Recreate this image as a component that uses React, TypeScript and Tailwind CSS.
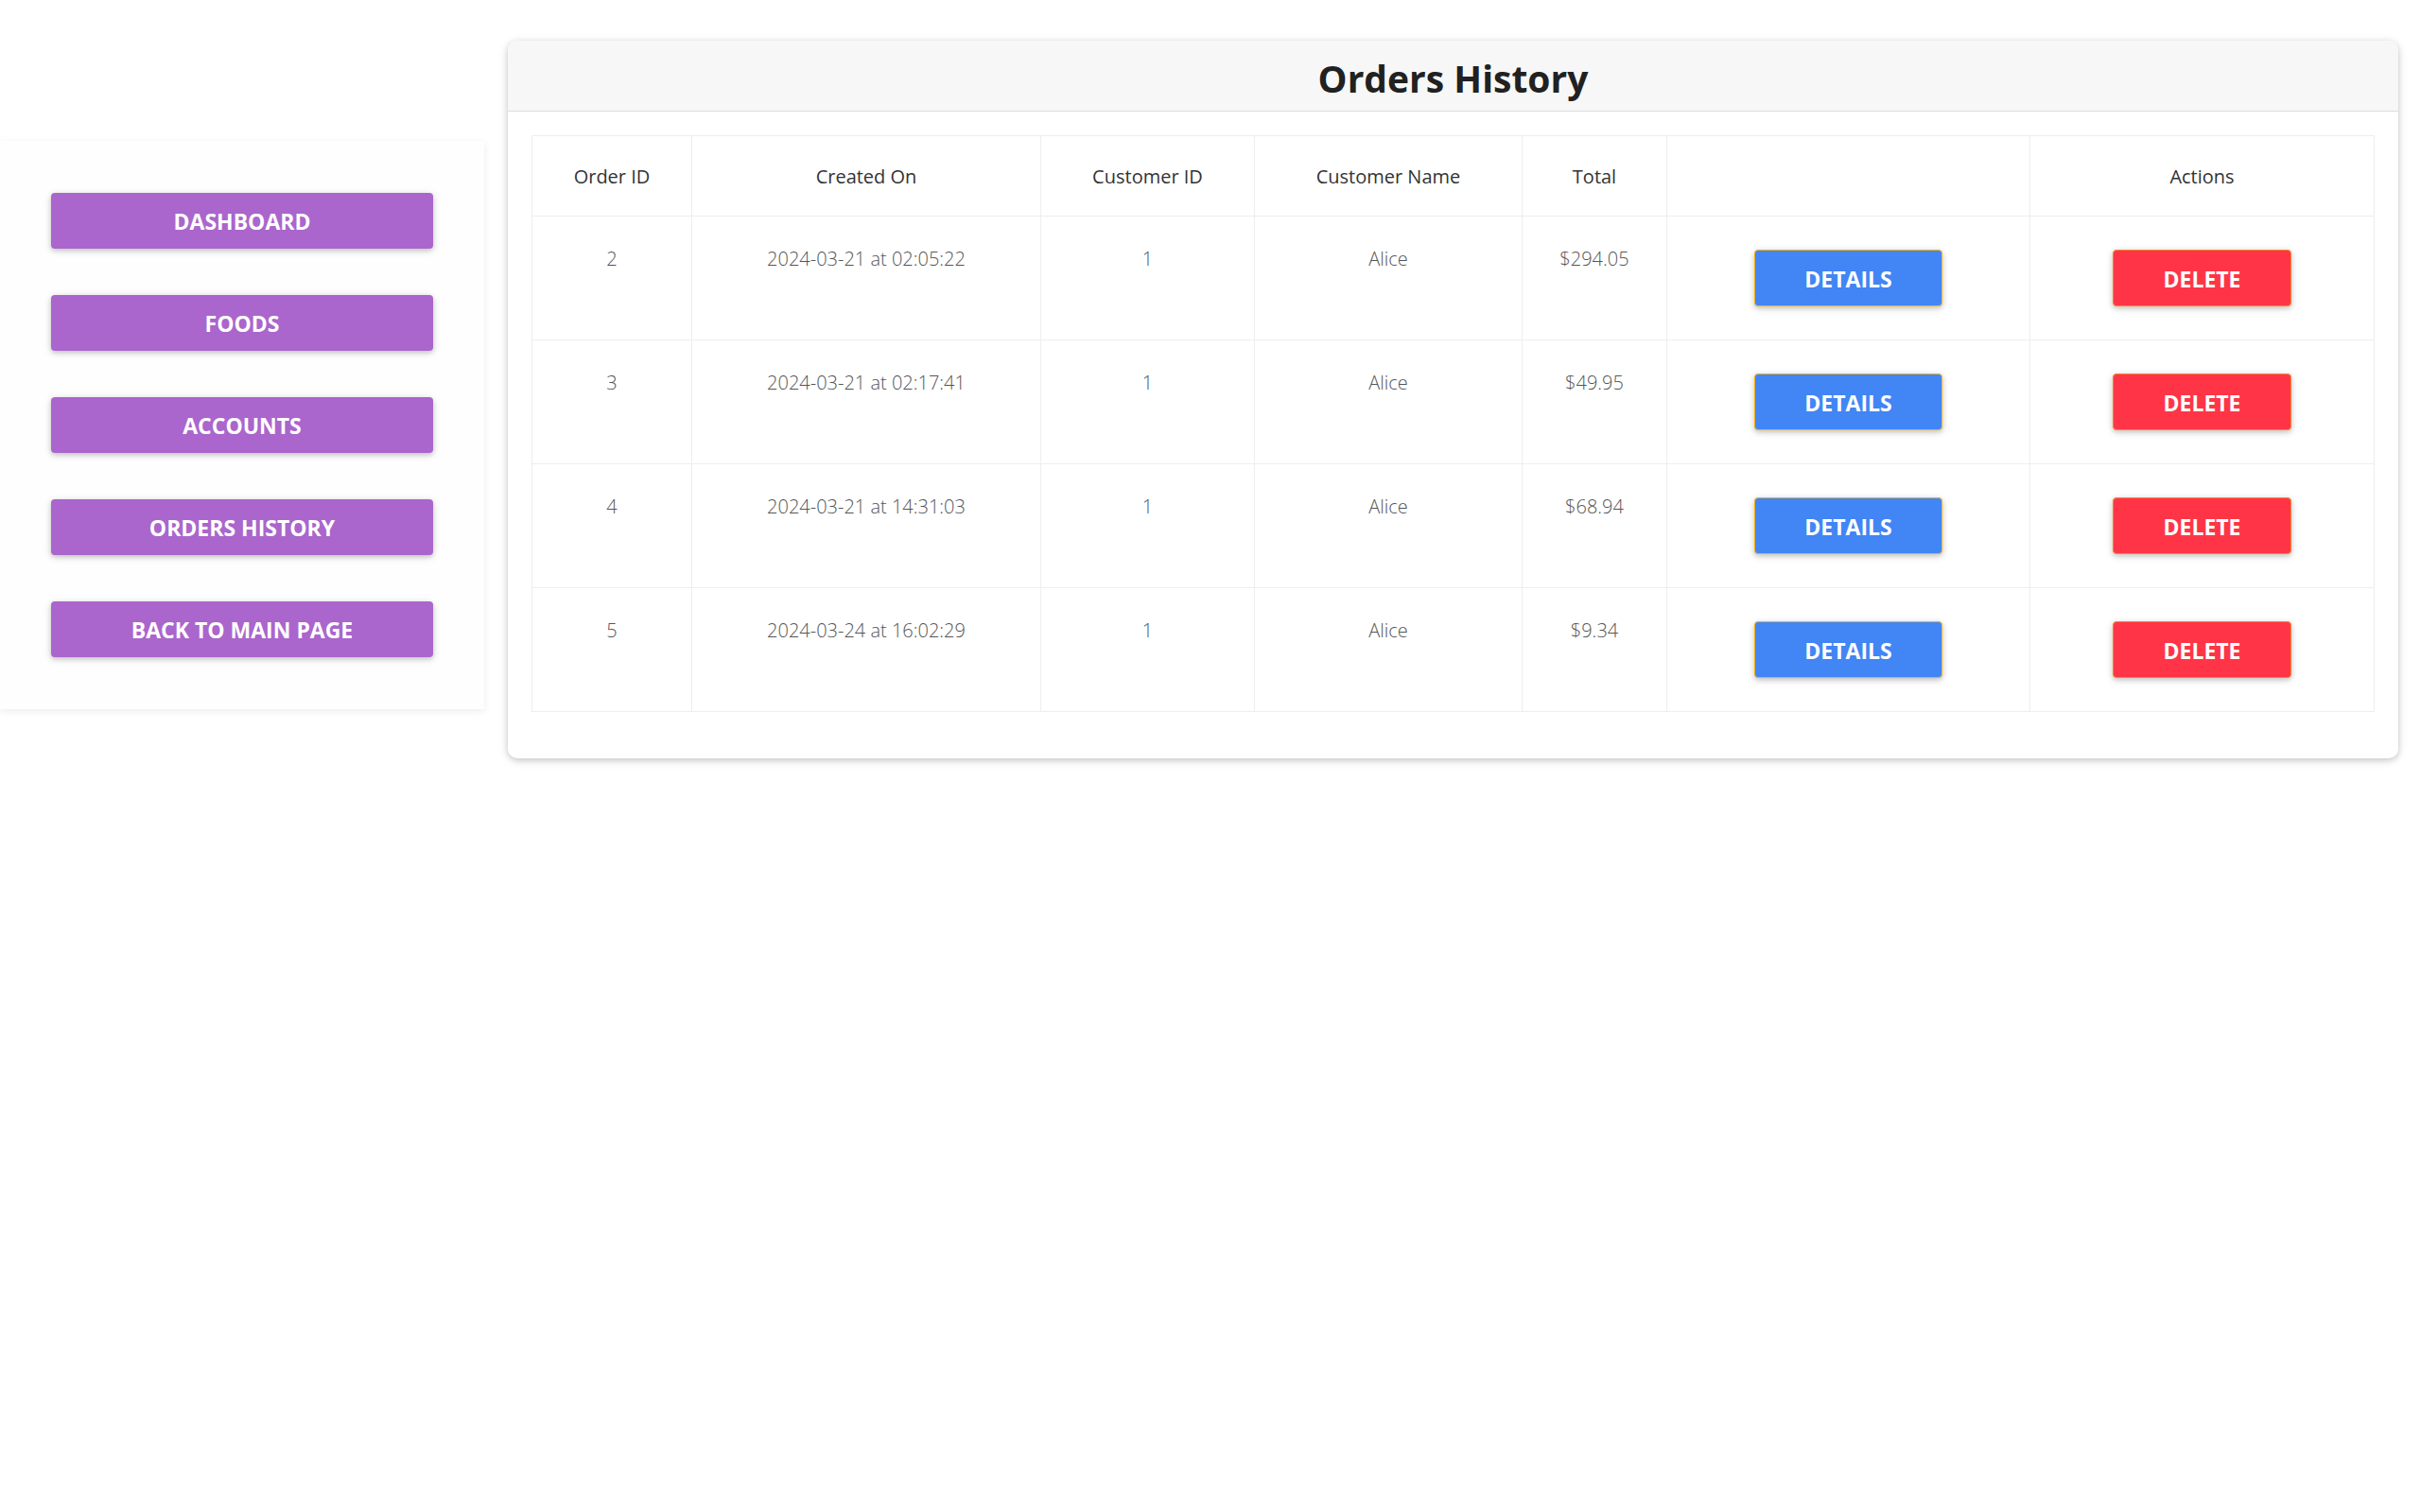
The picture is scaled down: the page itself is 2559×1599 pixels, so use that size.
const navItems = ["DASHBOARD", "FOODS", "ACCOUNTS", "ORDERS HISTORY", "BACK TO MAIN PAGE"];

const orders = [
  { id: 2, createdOn: "2024-03-21 at 02:05:22", customerId: 1, customerName: "Alice", total: "$294.05" },
  { id: 3, createdOn: "2024-03-21 at 02:17:41", customerId: 1, customerName: "Alice", total: "$49.95" },
  { id: 4, createdOn: "2024-03-21 at 14:31:03", customerId: 1, customerName: "Alice", total: "$68.94" },
  { id: 5, createdOn: "2024-03-24 at 16:02:29", customerId: 1, customerName: "Alice", total: "$9.34" },
];

const btnShadow = "shadow-[0_2px_5px_0_rgba(0,0,0,0.16),0_2px_10px_0_rgba(0,0,0,0.12)]";

export default function App() {
  return (
    <div
      className="flex min-h-screen bg-white pr-[23px]"
      style={{ fontFamily: '"Open Sans", "Noto Sans", sans-serif' }}
    >
      {/* Sidebar */}
      <aside className="mt-[149px] w-[512px] shrink-0 self-start bg-[#fefefe] px-[54px] py-[55px] shadow-[0_2px_8px_0_rgba(0,0,0,0.08)]">
        <nav className="flex flex-col gap-[49px]">
          {navItems.map((item) => (
            <button
              key={item}
              className={`h-[59px] w-full rounded-[4px] bg-[#aa66cc] pt-[2px] text-[23px] font-bold text-white ${btnShadow}`}
            >
              {item}
            </button>
          ))}
        </nav>
      </aside>

      {/* Orders panel */}
      <main className="ml-[25px] mt-[43px] flex-1 self-start overflow-hidden rounded-[10px] bg-white shadow-[0_2px_6px_0_rgba(0,0,0,0.16),0_2px_12px_0_rgba(0,0,0,0.1)]">
        <div className="flex h-[75px] items-center justify-center border-b border-[#dcdcdc] bg-[#f7f7f7]">
          <h2 className="pt-[6px] text-[39px] font-bold text-[#212121]">Orders History</h2>
        </div>

        <div className="px-[25px] pb-[49px] pt-[25px]">
          <table className="w-full table-fixed border-collapse border border-[#eeeeee] text-center text-[20px] leading-[30px]">
            <thead>
              <tr className="text-[#333]">
                <th className="w-[169px] border border-[#eeeeee] pb-[26px] pt-[28px] font-normal">Order ID</th>
                <th className="w-[369px] border border-[#eeeeee] pb-[26px] pt-[28px] font-normal">Created On</th>
                <th className="w-[226px] border border-[#eeeeee] pb-[26px] pt-[28px] font-normal">Customer ID</th>
                <th className="w-[283px] border border-[#eeeeee] pb-[26px] pt-[28px] font-normal">Customer Name</th>
                <th className="w-[153px] border border-[#eeeeee] pb-[26px] pt-[28px] font-normal">Total</th>
                <th className="w-[384px] border border-[#eeeeee] pb-[26px] pt-[28px] font-normal"></th>
                <th className="border border-[#eeeeee] pb-[26px] pt-[28px] font-normal">Actions</th>
              </tr>
            </thead>
            <tbody>
              {orders.map((o) => (
                <tr key={o.id} className="align-top font-light text-[#555]">
                  <td className="border border-[#eeeeee] pt-[30px]">{o.id}</td>
                  <td className="border border-[#eeeeee] pt-[30px]">{o.createdOn}</td>
                  <td className="border border-[#eeeeee] pt-[30px]">{o.customerId}</td>
                  <td className="border border-[#eeeeee] pt-[30px]">{o.customerName}</td>
                  <td className="border border-[#eeeeee] pt-[30px]">{o.total}</td>
                  <td className="border border-[#eeeeee] py-[26px]">
                    <button
                      className={`mx-auto my-[9px] block h-[60px] w-[199px] rounded-[4px] border border-[#f5b21a] bg-[#4285f4] pt-[2px] text-[23px] font-bold text-white ${btnShadow}`}
                    >
                      DETAILS
                    </button>
                  </td>
                  <td className="border border-[#eeeeee] py-[26px]">
                    <button
                      className={`mx-auto my-[9px] block h-[60px] w-[189px] rounded-[4px] border border-[#f7862c] bg-[#ff3547] pt-[2px] text-[23px] font-bold text-white ${btnShadow}`}
                    >
                      DELETE
                    </button>
                  </td>
                </tr>
              ))}
            </tbody>
          </table>
        </div>
      </main>
    </div>
  );
}
